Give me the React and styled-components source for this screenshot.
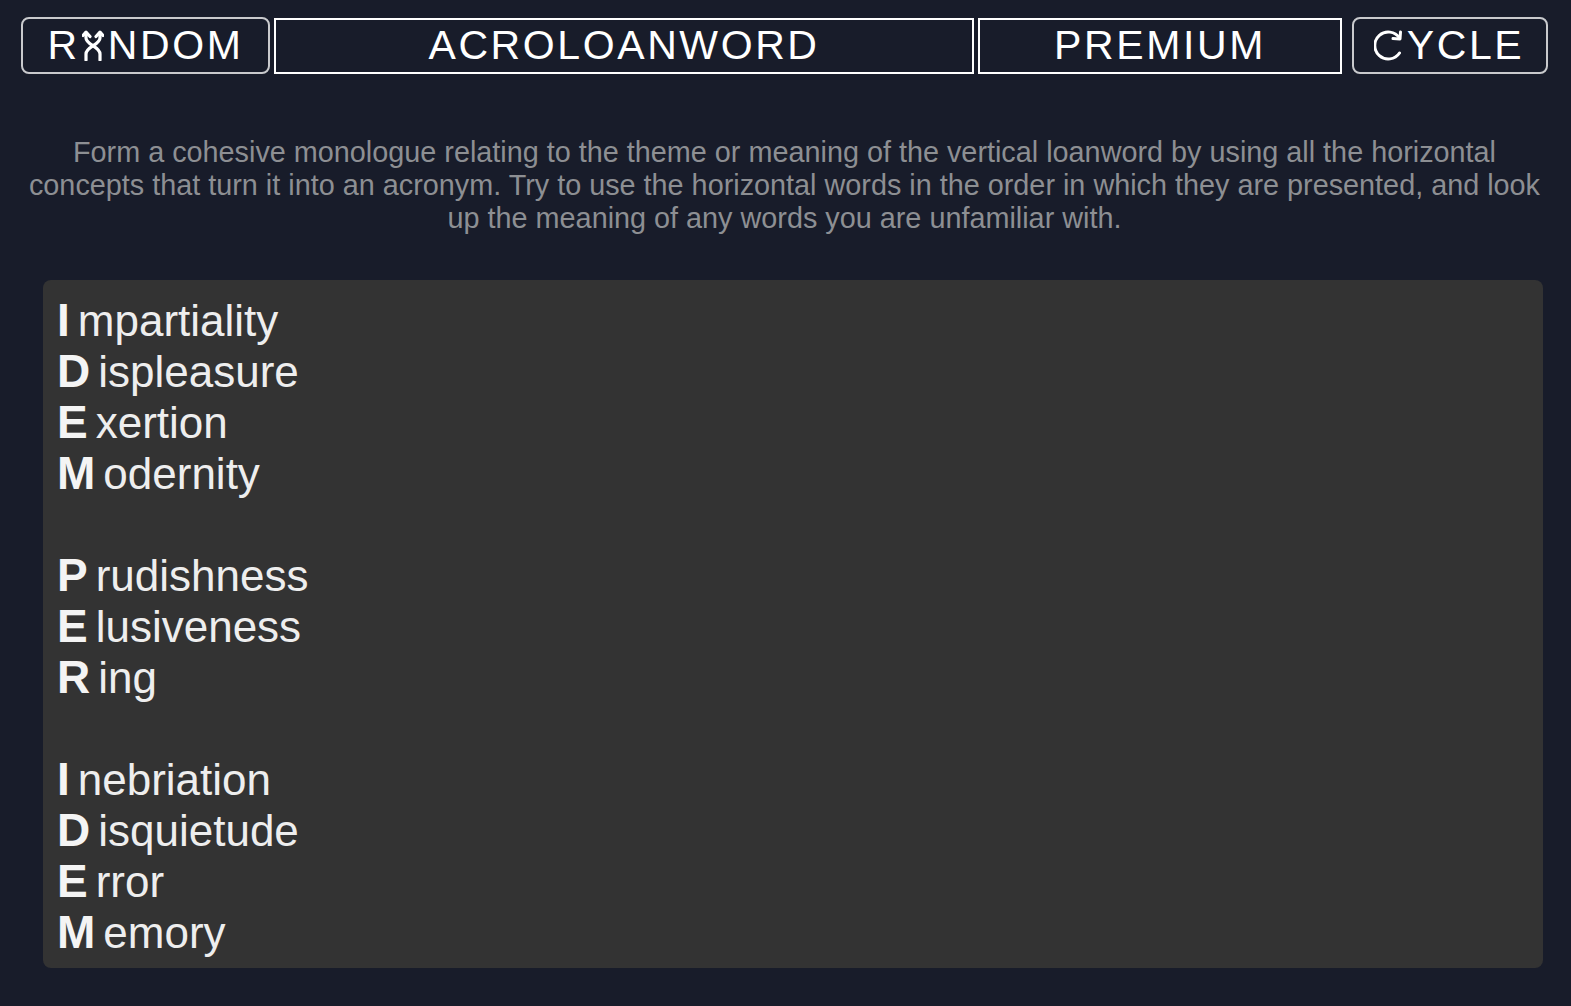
import React from "react";
import styled, { createGlobalStyle } from "styled-components";

const GlobalStyle = createGlobalStyle`
  html, body {
    margin: 0;
    padding: 0;
    background-color: #181c2a;
    font-family: "Liberation Sans", Arial, sans-serif;
  }
`;

const Page = styled.div`
  min-height: 100vh;
  background-color: #181c2a;
  padding: 17px 23px 30px 21px;
  box-sizing: border-box;
`;

const Toolbar = styled.nav`
  display: flex;
  align-items: center;
  height: 57px;
`;

const NavButton = styled.button`
  width: ${(p) => p.$width}px;
  flex-shrink: 0;
  height: ${(p) => (p.$rounded ? 57 : 56)}px;
  margin-right: ${(p) => p.$gap || 0}px;
  display: flex;
  align-items: center;
  justify-content: center;
  box-sizing: border-box;
  background: transparent;
  color: #ffffff;
  border: 2px solid ${(p) => (p.$rounded ? "#c9cacd" : "#ffffff")};
  border-radius: ${(p) => (p.$rounded ? "8px" : "0")};
  font-family: "Liberation Sans", Arial, sans-serif;
  font-size: 41px;
  letter-spacing: 2.6px;
  padding: 0;
  cursor: pointer;
`;

const Glyph = styled.svg`
  width: ${(p) => p.$w}px;
  height: 31px;
  margin: 0 ${(p) => p.$mr || 2}px 0 ${(p) => p.$ml || 0}px;
  flex-shrink: 0;
`;

const Intro = styled.p`
  margin: 62px auto 45px;
  max-width: 1512px;
  text-align: center;
  color: #8d8f93;
  font-size: 28.8px;
  line-height: 33px;
`;

const Board = styled.section`
  margin-left: 22px;
  width: 1500px;
  height: 688px;
  box-sizing: border-box;
  background-color: #333333;
  border-radius: 8px;
  padding: 15px 14px 11px;
`;

const Row = styled.div`
  height: 51px;
  display: flex;
  align-items: baseline;
  color: #eeeeee;
  font-size: 44px;
  line-height: 51px;
`;

const Initial = styled.span`
  font-weight: bold;
  font-size: 46px;
  color: #f4f4f4;
  margin-right: 8px;
`;

const ShuffleA = () => (
  <Glyph $w={22} $ml={2} $mr={4} viewBox="0 0 22 31" fill="none" stroke="#fff" strokeWidth="3.2" strokeLinecap="round" strokeLinejoin="round">
    <path d="M4 30 V24 C4 16.5 18 15 18 8 V3" />
    <path d="M18 30 V24 C18 16.5 4 15 4 8 V3" />
    <path d="M14 6.5 L18 2.2 L21 5.5" />
    <path d="M8 6.5 L4 2.2 L1 5.5" />
  </Glyph>
);

const CycleC = () => (
  <Glyph $w={30} $ml={-2} $mr={3} viewBox="0 0 30 31" fill="none" stroke="#fff" strokeWidth="3" strokeLinecap="round" strokeLinejoin="round">
    <path d="M25.5 23 A13.5 13.5 0 1 1 25.5 8" />
    <path d="M26.5 2 L26 9 L19 8.5" />
  </Glyph>
);

const groups = [
  [
    ["I", "mpartiality"],
    ["D", "ispleasure"],
    ["E", "xertion"],
    ["M", "odernity"],
  ],
  [
    ["P", "rudishness"],
    ["E", "lusiveness"],
    ["R", "ing"],
  ],
  [
    ["I", "nebriation"],
    ["D", "isquietude"],
    ["E", "rror"],
    ["M", "emory"],
  ],
];

export default function App() {
  return (
    <>
      <GlobalStyle />
      <Page>
        <Toolbar>
          <NavButton $width={249} $gap={4} $rounded>
            R<ShuffleA />NDOM
          </NavButton>
          <NavButton $width={700} $gap={4}>ACROLOANWORD</NavButton>
          <NavButton $width={364} $gap={10}>PREMIUM</NavButton>
          <NavButton $width={196} $rounded>
            <CycleC />YCLE
          </NavButton>
        </Toolbar>

        <Intro>
          Form a cohesive monologue relating to the theme or meaning of the
          vertical loanword by using all the horizontal concepts that turn it
          into an acronym. Try to use the horizontal words in the order in which
          they are presented, and look up the meaning of any words you are
          unfamiliar with.
        </Intro>

        <Board>
          {groups.map((group, gi) => (
            <React.Fragment key={gi}>
              {gi > 0 && <Row />}
              {group.map(([first, rest], i) => (
                <Row key={i}>
                  <Initial>{first}</Initial>
                  {rest}
                </Row>
              ))}
            </React.Fragment>
          ))}
        </Board>
      </Page>
    </>
  );
}
